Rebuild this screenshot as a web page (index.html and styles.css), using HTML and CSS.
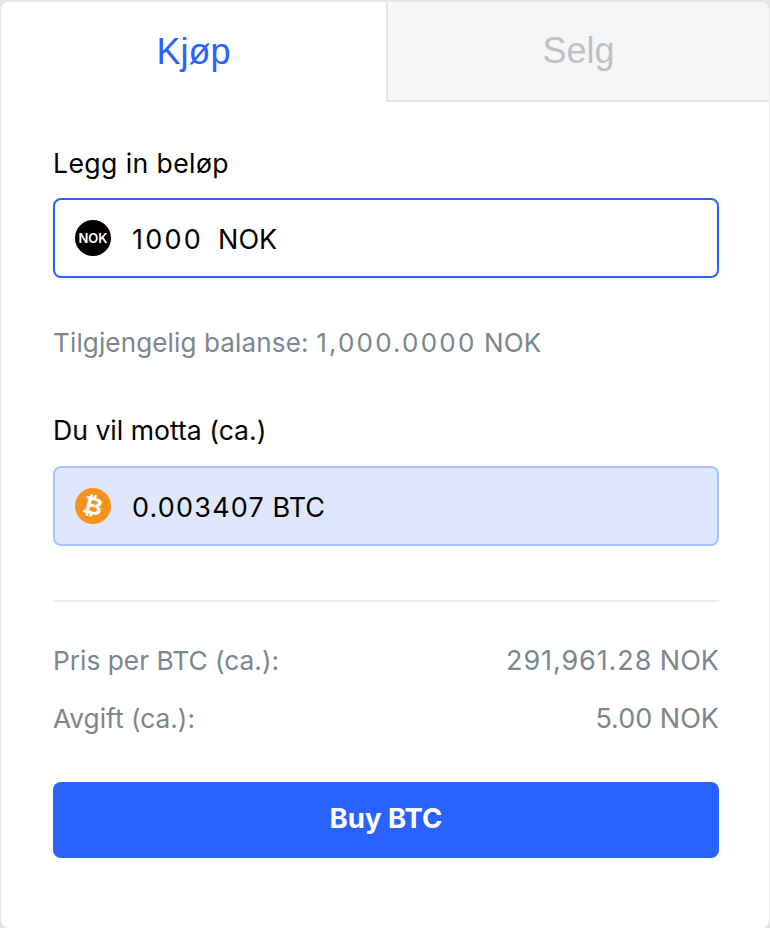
FILE: index.html
```html
<!DOCTYPE html>
<html lang="en">
<head>
    <meta charset="UTF-8">
    <title>Kjøp BTC</title>
    <link rel="stylesheet" href="styles.css">
</head>
<body>
    <div class="card">
        <div class="tabs">
            <div class="tab active">Kjøp</div>
            <div class="tab">Selg</div>
        </div>
        <form class="content">
            <div class="label first">Legg in beløp</div>
            <div class="field focus">
                <span class="coin nok">NOK</span>
                <span class="amount"><span class="digits-wide">1000</span>&nbsp;&nbsp;NOK</span>
            </div>
            <div class="balance">Tilgjengelig balanse: <span class="digits-wide">1,000.0000</span> NOK</div>
            <div class="label">Du vil motta (ca.)</div>
            <div class="field result">
                <svg class="coin" width="36" height="36" viewBox="0 0 36 36">
                    <circle cx="18" cy="18" r="18" fill="#f7931a"/>
                    <text x="18" y="26" class="btc-sign" transform="rotate(14 18 18)">₿</text>
                </svg>
                <span class="amount"><span class="digits">0.003407</span> BTC</span>
            </div>
            <hr class="divider">
            <div class="row"><span>Pris per BTC (ca.):</span><span class="value"><span class="row-digits">291,961.28</span> NOK</span></div>
            <div class="row"><span>Avgift (ca.):</span><span class="value">5.00 NOK</span></div>
            <button type="button" class="buy">Buy BTC</button>
        </form>
    </div>
</body>
</html>
```
FILE: styles.css
```css
*, *::before, *::after {
    box-sizing: border-box;
}
body {
    margin: 0;
    background-color: #e6e6e6;
    font-family: Inter, "Liberation Sans", sans-serif;
}

.card {
    height: 926px;
    margin: 2px 1px 0 1px;
    background-color: white;
    border-radius: 8px;
    overflow: hidden;
}

.tabs {
    display: flex;
    height: 100px;
    font-family: "Liberation Sans", sans-serif;
    font-size: 36px;
}

.tab {
    flex: 1;
    display: flex;
    align-items: center;
    justify-content: center;
    color: #bdc1c6;
    background-color: #f6f6f6;
    border-left: 2px solid #e6e6e6;
    border-bottom: 2px solid #e6e6e6;
}

.tab.active {
    flex: 0 0 385px;
    color: #2962ff;
    background-color: white;
    border: none;
}

.content {
    padding: 47px 50px 0 52px;
}

.label {
    font-size: 26.6px;
    line-height: 28px;
    color: black;
    margin-bottom: 22px;
}

.label.first {
    margin-bottom: 21px;
    letter-spacing: 0.4px;
}

.field {
    display: flex;
    align-items: center;
    height: 80px;
    padding-left: 20px;
    border: 2px solid #2962ff;
    border-radius: 8px;
}

.field.result {
    background-color: #dfe7fd;
    border-color: #a9c0ff;
}

.coin {
    flex: none;
    width: 36px;
    height: 36px;
    margin-right: 21px;
}

.nok {
    display: flex;
    align-items: center;
    justify-content: center;
    border-radius: 50%;
    background-color: black;
    color: white;
    font-size: 13px;
    font-weight: 600;
}

.btc-sign {
    fill: white;
    font-size: 24px;
    font-weight: 700;
    text-anchor: middle;
    font-family: "DejaVu Sans", sans-serif;
}

.amount {
    padding-top: 2px;
    font-size: 27px;
    color: black;
}

.digits {
    letter-spacing: 1.2px;
}

.digits-wide {
    letter-spacing: 2.2px;
}

.row-digits {
    letter-spacing: 0.9px;
}

.balance {
    margin: 50px 0 58px;
    font-size: 26px;
    line-height: 30px;
    letter-spacing: 0.15px;
    color: #7c868e;
}

.divider {
    margin: 54px 0 43px;
    border: none;
    border-top: 2px solid #e9ebec;
}

.row {
    display: flex;
    justify-content: space-between;
    align-items: baseline;
    height: 58px;
    font-size: 26.3px;
    line-height: 32px;
    color: #7c868e;
}

.value {
    font-size: 27px;
}

.buy {
    display: block;
    width: 100%;
    height: 76px;
    margin-top: 21px;
    padding: 0 0 4px;
    background-color: #2962ff;
    color: white;
    border: none;
    border-radius: 8px;
    font-family: Inter, "Liberation Sans", sans-serif;
    font-size: 27.5px;
    font-weight: 700;
}
```
